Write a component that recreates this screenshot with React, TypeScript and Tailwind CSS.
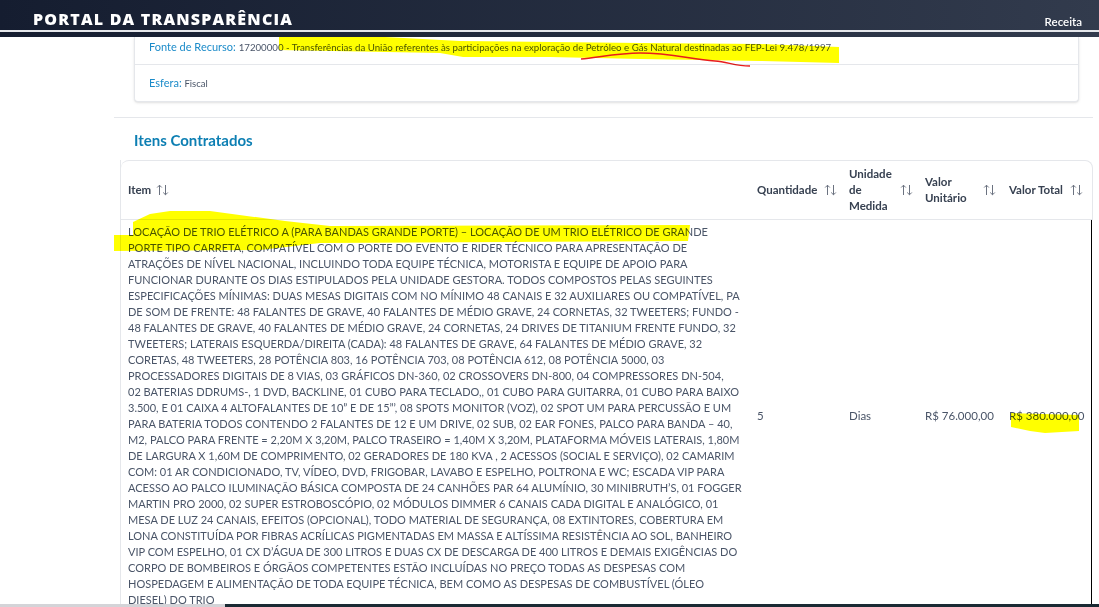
import React from 'react';

const itemLines = [
    'LOCAÇÃO DE TRIO ELÉTRICO A (PARA BANDAS GRANDE PORTE) – LOCAÇÃO DE UM TRIO ELÉTRICO DE GRANDE',
    'PORTE TIPO CARRETA, COMPATÍVEL COM O PORTE DO EVENTO E RIDER TÉCNICO PARA APRESENTAÇÃO DE',
    'ATRAÇÕES DE NÍVEL NACIONAL, INCLUINDO TODA EQUIPE TÉCNICA, MOTORISTA E EQUIPE DE APOIO PARA',
    'FUNCIONAR DURANTE OS DIAS ESTIPULADOS PELA UNIDADE GESTORA. TODOS COMPOSTOS PELAS SEGUINTES',
    'ESPECIFICAÇÕES MÍNIMAS: DUAS MESAS DIGITAIS COM NO MÍNIMO 48 CANAIS E 32 AUXILIARES OU COMPATÍVEL, PA',
    'DE SOM DE FRENTE: 48 FALANTES DE GRAVE, 40 FALANTES DE MÉDIO GRAVE, 24 CORNETAS, 32 TWEETERS; FUNDO -',
    '48 FALANTES DE GRAVE, 40 FALANTES DE MÉDIO GRAVE, 24 CORNETAS, 24 DRIVES DE TITANIUM FRENTE FUNDO, 32',
    'TWEETERS; LATERAIS ESQUERDA/DIREITA (CADA): 48 FALANTES DE GRAVE, 64 FALANTES DE MÉDIO GRAVE, 32',
    'CORETAS, 48 TWEETERS, 28 POTÊNCIA 803, 16 POTÊNCIA 703, 08 POTÊNCIA 612, 08 POTÊNCIA 5000, 03',
    'PROCESSADORES DIGITAIS DE 8 VIAS, 03 GRÁFICOS DN-360, 02 CROSSOVERS DN-800, 04 COMPRESSORES DN-504,',
    '02 BATERIAS DDRUMS-, 1 DVD, BACKLINE, 01 CUBO PARA TECLADO,, 01 CUBO PARA GUITARRA, 01 CUBO PARA BAIXO',
    '3.500, E 01 CAIXA 4 ALTOFALANTES DE 10” E DE 15”’, 08 SPOTS MONITOR (VOZ), 02 SPOT UM PARA PERCUSSÃO E UM',
    'PARA BATERIA TODOS CONTENDO 2 FALANTES DE 12 E UM DRIVE, 02 SUB, 02 EAR FONES, PALCO PARA BANDA – 40,',
    'M2, PALCO PARA FRENTE = 2,20M X 3,20M, PALCO TRASEIRO = 1,40M X 3,20M, PLATAFORMA MÓVEIS LATERAIS, 1,80M',
    'DE LARGURA X 1,60M DE COMPRIMENTO, 02 GERADORES DE 180 KVA , 2 ACESSOS (SOCIAL E SERVIÇO), 02 CAMARIM',
    'COM: 01 AR CONDICIONADO, TV, VÍDEO, DVD, FRIGOBAR, LAVABO E ESPELHO, POLTRONA E WC; ESCADA VIP PARA',
    'ACESSO AO PALCO ILUMINAÇÃO BÁSICA COMPOSTA DE 24 CANHÕES PAR 64 ALUMÍNIO, 30 MINIBRUTH’S, 01 FOGGER',
    'MARTIN PRO 2000, 02 SUPER ESTROBOSCÓPIO, 02 MÓDULOS DIMMER 6 CANAIS CADA DIGITAL E ANALÓGICO, 01',
    'MESA DE LUZ 24 CANAIS, EFEITOS (OPCIONAL), TODO MATERIAL DE SEGURANÇA, 08 EXTINTORES, COBERTURA EM',
    'LONA CONSTITUÍDA POR FIBRAS ACRÍLICAS PIGMENTADAS EM MASSA E ALTÍSSIMA RESISTÊNCIA AO SOL, BANHEIRO',
    'VIP COM ESPELHO, 01 CX D’ÁGUA DE 300 LITROS E DUAS CX DE DESCARGA DE 400 LITROS E DEMAIS EXIGÊNCIAS DO',
    'CORPO DE BOMBEIROS E ÓRGÃOS COMPETENTES ESTÃO INCLUÍDAS NO PREÇO TODAS AS DESPESAS COM',
    'HOSPEDAGEM E ALIMENTAÇÃO DE TODA EQUIPE TÉCNICA, BEM COMO AS DESPESAS DE COMBUSTÍVEL (ÓLEO',
    'DIESEL) DO TRIO',
];

const SortIcon = () => (
    <svg width="13" height="12" viewBox="0 0 13 12" fill="none" stroke="#6b7280" strokeWidth="1" className="shrink-0">
        <path d="M3.5 11V1.2M1.2 3.5L3.5 1.2L5.8 3.5" />
        <path d="M9.5 1V10.8M7.2 8.5L9.5 10.8L11.8 8.5" />
    </svg>
);

const HeaderCell = ({ label, className }: { label: React.ReactNode; className: string }) => (
    <div className={`flex items-center justify-between shrink-0 text-[11.5px] leading-[16px] font-bold text-[#374151] ${className}`}>
        <span>{label}</span>
        <SortIcon />
    </div>
);

export default function App() {
    return (
        <div className="relative w-[1099px] h-[607px] overflow-hidden bg-white font-['Lato',sans-serif] text-[#4a5568]">
            <header className="h-[37px] bg-gradient-to-r from-[#151d30] to-[#323b4d] flex flex-col">
                <div className="h-[30px] flex items-center justify-between pl-[33px] pr-[17px]">
                    <span className="text-white font-extrabold text-[16px] tracking-[1.2px] pt-[8px] font-['Open_Sans',sans-serif]">PORTAL DA TRANSPARÊNCIA</span>
                    <span className="text-white text-[11.5px] font-semibold pt-[14px]">Receita</span>
                </div>
                <div className="h-[2px] bg-[#e5e7eb]" />
            </header>

            <main className="pl-[114px] pr-[6px]">
                <div className="ml-[20px] mr-[14px] h-[65px] bg-white border-x border-b border-[#e5e7eb] rounded-b-[4px] shadow-sm">
                    <div className="h-[28px] border-b border-[#e5e7eb] pl-[14px] pt-[2px] text-[9.7px] leading-[16px] whitespace-nowrap">
                        <span className="text-[#1b8bc9] text-[11px]">Fonte de Recurso: </span>
                        <span>17200000 - Transferências da União referentes às participações na exploração de Petróleo e Gás Natural destinadas ao FEP-Lei 9.478/1997</span>
                    </div>
                    <div className="pl-[14px] pt-[10px] text-[9.5px] leading-[16px]">
                        <span className="text-[#1b8bc9] text-[11px]">Esfera: </span>
                        <span>Fiscal</span>
                    </div>
                </div>

                <div className="mt-[15px] border-t border-[#e5e7eb] pt-[12px]">
                    <h2 className="ml-[20px] text-[15px] leading-[20px] font-bold text-[#0d7fb3]">Itens Contratados</h2>
                </div>

                <section className="ml-[6px] mt-[10px] border-l border-[#e5e7eb] h-[470px]">
                    <div className="h-[60px] flex items-center border-t border-r border-b border-[#e5e7eb] rounded-t-[8px] pl-[7px]">
                        <div className="w-[629px] shrink-0 flex items-center gap-[5px] text-[11.5px] font-bold text-[#374151]">
                            Item <SortIcon />
                        </div>
                        <HeaderCell label="Quantidade" className="w-[80px] mr-[12px]" />
                        <HeaderCell label={<>Unidade<br />de<br />Medida</>} className="w-[64px] mr-[12px]" />
                        <HeaderCell label={<>Valor<br />Unitário</>} className="w-[71px] mr-[13px]" />
                        <HeaderCell label="Valor Total" className="w-[74px]" />
                    </div>
                    <div className="flex items-center mr-[1px] border-r border-black h-[392px] pl-[7px] text-[11.5px]">
                        <div className="w-[629px] shrink-0 text-[11px] leading-[16px] whitespace-nowrap">
                            {itemLines.map((line) => (
                                <div key={line}>{line}</div>
                            ))}
                        </div>
                        <div className="w-[92px] shrink-0">5</div>
                        <div className="w-[76px] shrink-0">Dias</div>
                        <div className="w-[84px] shrink-0">R$ 76.000,00</div>
                        <div className="whitespace-nowrap">R$ 380.000,00</div>
                    </div>
                </section>
            </main>

            {/* marcações feitas por cima do print */}
            <svg className="absolute inset-0 mix-blend-multiply pointer-events-none" width="1099" height="607" viewBox="0 0 1099 607">
                <path d="M279 37L385 37L460 41L640 43L760 44L839 47L839 63L760 61L640 59L550 57L463 57L440 53L279 50Z" fill="#ffff00" />
                <path d="M133 222L150 214L170 211L210 211L285 221L330 226L690 225L688 241L320 243L260 250L114 251L114 235L133 235Z" fill="#ffff00" />
                <path d="M1011 413L1079 415L1079 431L1045 433L1030 431L1011 427Z" fill="#ffff00" />
                <path d="M581 59C600 57 620 53 640 53C670 53 690 59 715 61C728 62 735 66 750 66" fill="none" stroke="#e81c1c" strokeWidth="1.5" />
            </svg>

            {/* barra de tarefas cortada na base */}
            <div className="absolute left-0 right-0 bottom-0 h-[3px] flex">
                <div className="w-[225px] bg-[#d4d4d8]" />
                <div className="flex-1 bg-[#1a2a33]" />
            </div>
        </div>
    );
}
